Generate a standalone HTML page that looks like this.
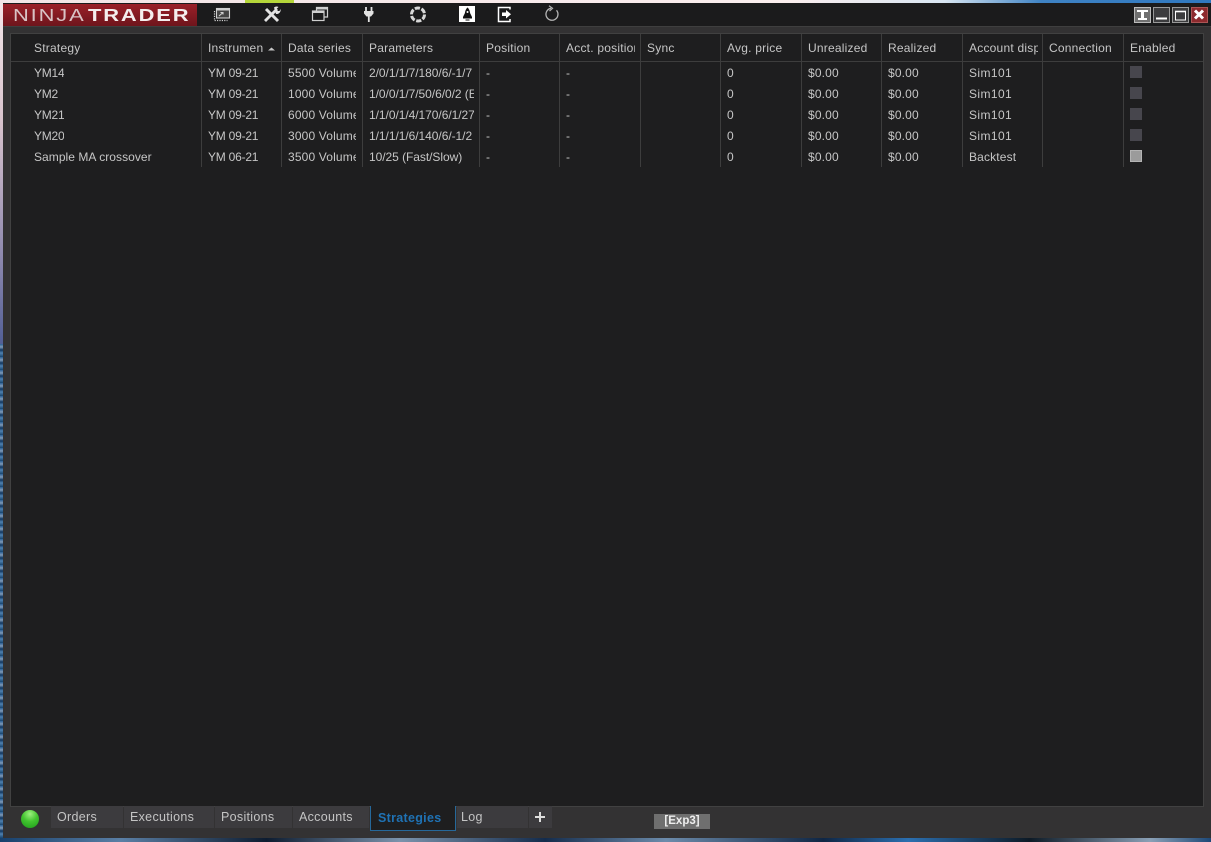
<!DOCTYPE html>
<html><head><meta charset="utf-8"><style>
html,body{margin:0;padding:0}
body{width:1211px;height:842px;overflow:hidden;position:relative;background:#123a66;font-family:"Liberation Sans",sans-serif}
div{position:absolute;box-sizing:border-box}
.t{font-size:12px;color:#c6c6c6;white-space:nowrap;overflow:hidden;line-height:14px;letter-spacing:.15px}
.h{top:41px;letter-spacing:.22px}
.y{letter-spacing:-.22px}
.p{letter-spacing:-.05px}
.s{letter-spacing:.4px}
.sep{width:1px;top:34px;height:133px;background:#3d3d3d}
.tab{top:806px;height:22px;background:#3c3b3e;color:#c4c4c4;font-size:12.5px;line-height:23px;padding-left:6px;letter-spacing:.3px}
.cb{left:1130px;width:12px;height:12px;background:#47464d}
svg{position:absolute;overflow:visible}
</style></head><body>
<div style="left:0;top:0;width:1211px;height:4px;background:linear-gradient(90deg,#f2e4e6 0,#fbeeee 65%,#d9e6f2 78%,#3f83c4 86%,#2f78c0 100%)"></div>
<div style="left:245px;top:0;width:49px;height:3px;background:#b5d63a"></div>
<div style="left:0;top:4px;width:3px;height:340px;background:linear-gradient(180deg,#f3e5e8,#d9c3cd 35%,#8d88ae 75%,#525f96)"></div>
<div style="left:0;top:344px;width:3px;height:498px;background:repeating-linear-gradient(180deg,#2b5f95 0,#7f9ab8 3px,#10365f 6px,#4f80af 9px,#17456f 13px)"></div>
<div style="left:0;top:838px;width:1211px;height:4px;background:linear-gradient(90deg,#17406c 0,#5a7fa5 10%,#0d1c30 22%,#7b93ac 33%,#142c4c 45%,#6c8bab 55%,#0f2644 68%,#2b6fb0 75%,#0d1a26 85%,#8aa0b6 95%,#1d4877)"></div>

<div style="left:3px;top:3px;width:1208px;height:835px;background:#333233"></div>
<div style="left:3px;top:3px;width:1208px;height:23px;background:#1b1b1c"></div>
<div style="left:3px;top:26px;width:1208px;height:1px;background:#3f3f3f"></div>
<div style="left:3px;top:4px;width:194px;height:22px;background:linear-gradient(180deg,#9a2029,#6e151c)"></div>
<div style="left:13px;top:5px;height:20px;font-size:17.5px;line-height:20px;letter-spacing:1.5px;color:#d9c3c5;white-space:nowrap;transform-origin:0 50%;transform:scaleX(1.25)">NINJA</div>
<div style="left:88px;top:5px;height:20px;font-size:17.5px;line-height:20px;letter-spacing:1.5px;font-weight:bold;color:#f4eeee;white-space:nowrap;transform-origin:0 50%;transform:scaleX(1.25)">TRADER</div>

<svg style="left:0;top:0" width="1211" height="28" fill="none" stroke="#cfcfcf">
<rect x="216.500" y="8.500" width="13" height="9.500" fill="#444" stroke-width="1.100"/><path d="M216 9.500h14" stroke-width="2"/>
<path d="M214.500 11v9.500h13" stroke-dasharray="1.200 1.200" stroke-width="1.200"/><path d="M219 16l4-3.500m-2.500 0h2.500v2" stroke-width="1.100"/>
<path d="M266 9l12 12" stroke="#e2e2e2" stroke-width="3"/><path d="M277 9l-12 12" stroke="#e2e2e2" stroke-width="2.800"/>
<path d="M274 7.500a4 4 0 0 1 4.500-.5l-2 2 1 2 2 0 1-2a4 4 0 0 1-4.500 5z" fill="#e2e2e2" stroke="none"/>
<path d="M316.500 10.500V7.500h11v9.500h-3.500" stroke-width="1.200"/><path d="M316.500 8.500h11" stroke-width="2"/>
<rect x="312.500" y="11" width="11.500" height="9.500" stroke-width="1.200"/><path d="M312.500 12h11.500" stroke-width="2"/>
<path d="M366 7v5M371.500 7v5" stroke="#e2e2e2" stroke-width="1.800"/><path d="M364 11h9.500v2.500l-2.500 3h-4.500l-2.500-3z" fill="#e2e2e2" stroke="none"/><path d="M368.800 16v6" stroke="#e2e2e2" stroke-width="1.800"/>
<circle cx="418" cy="14.500" r="6.500" stroke="#d8d8d8" stroke-width="3" stroke-dasharray="5.200 1.600"/>
<rect x="459" y="6" width="16" height="16" fill="#fff" stroke="none"/>
<path d="M467.500 7.500c1.900 1.600 2.800 4.500 2.800 8.500h-5.600c0-4 .9-6.900 2.800-8.500z" fill="#111" stroke="none"/><path d="M464.700 13.500l-1.700 3.500v1.500h9V17l-1.700-3.500z" fill="#111" stroke="none"/><path d="M465.500 20h4" stroke="#111" stroke-width="1"/><circle cx="467.500" cy="12" r="1" fill="#fff" stroke="none"/>
<path d="M510 9.500V7.500h-11.500v14H510v-2.500" stroke="#fff" stroke-width="1.500"/><path d="M502 12.500h4V10l5 4.200-5 4.300v-2.500h-4z" fill="#fff" stroke="none"/>
<path d="M551 8.300a6 6 0 1 0 5.500 2" stroke="#b4b4b4" stroke-width="1.300"/><path d="M549 5.800l3.500 2.500-3 2.700" stroke="#b4b4b4" stroke-width="1.200"/>
</svg>

<div style="left:1134px;top:7px;width:17px;height:16px;background:#707070;border:1px solid #bbb"></div>
<div style="left:1153px;top:7px;width:17px;height:16px;background:#3c3c3e;border:1px solid #999"></div>
<div style="left:1172px;top:7px;width:17px;height:16px;background:#3c3c3e;border:1px solid #999"></div>
<div style="left:1191px;top:7px;width:17px;height:16px;background:#8d2a2e;border:1px solid #a55"></div>
<svg style="left:0;top:0" width="1211" height="28" fill="none">
<path d="M1137 10h11v2h-4v6h3v2h-9v-2h3v-6h-4z" fill="#fff"/>
<path d="M1156 18.500h11" stroke="#fff" stroke-width="2"/>
<rect x="1175.500" y="11.500" width="10" height="8.500" stroke="#fff" stroke-width="1"/><path d="M1175 11.500h11" stroke="#fff" stroke-width="1.600"/>
<path d="M1195 10.500l8 8m0-8l-8 8" stroke="#fff" stroke-width="3"/>
</svg>

<div style="left:10px;top:33px;width:1194px;height:774px;background:#1e1e1f;border:1px solid #414141"></div>
<div style="left:11px;top:61px;width:1192px;height:1px;background:#3d3d3d"></div>
<div class="sep" style="left:201px"></div><div class="sep" style="left:281px"></div><div class="sep" style="left:362px"></div><div class="sep" style="left:479px"></div><div class="sep" style="left:559px"></div><div class="sep" style="left:640px"></div><div class="sep" style="left:720px"></div><div class="sep" style="left:801px"></div><div class="sep" style="left:881px"></div><div class="sep" style="left:962px"></div><div class="sep" style="left:1042px"></div><div class="sep" style="left:1123px"></div>

<div class="t h" style="left:34px">Strategy</div>
<div class="t h" style="left:208px">Instrumen</div>
<svg style="left:268px;top:47px" width="8" height="4"><path d="M0 3.500L3.500 0.500L7 3.500z" fill="#c6c6c6"/></svg>
<div class="t h" style="left:288px">Data series</div>
<div class="t h" style="left:369px">Parameters</div>
<div class="t h" style="left:486px">Position</div>
<div class="t h" style="left:566px;width:69px">Acct. position</div>
<div class="t h" style="left:647px">Sync</div>
<div class="t h" style="left:727px">Avg. price</div>
<div class="t h" style="left:808px">Unrealized</div>
<div class="t h" style="left:888px">Realized</div>
<div class="t h" style="left:969px;width:69px">Account display</div>
<div class="t h" style="left:1049px">Connection</div>
<div class="t h" style="left:1130px">Enabled</div>

<div class="t y" style="left:34px;top:66px">YM14</div><div class="t y" style="left:208px;top:66px">YM 09-21</div><div class="t" style="left:288px;top:66px;width:68px">5500 Volume</div><div class="t p" style="left:369px;top:66px;width:105px">2/0/1/1/7/180/6/-1/7</div><div class="t" style="left:486px;top:66px">-</div><div class="t" style="left:566px;top:66px">-</div><div class="t" style="left:727px;top:66px">0</div><div class="t" style="left:808px;top:66px">$0.00</div><div class="t" style="left:888px;top:66px">$0.00</div><div class="t s" style="left:969px;top:66px">Sim101</div>
<div class="t y" style="left:34px;top:87px">YM2</div><div class="t y" style="left:208px;top:87px">YM 09-21</div><div class="t" style="left:288px;top:87px;width:68px">1000 Volume</div><div class="t p" style="left:369px;top:87px;width:105px">1/0/0/1/7/50/6/0/2 (E</div><div class="t" style="left:486px;top:87px">-</div><div class="t" style="left:566px;top:87px">-</div><div class="t" style="left:727px;top:87px">0</div><div class="t" style="left:808px;top:87px">$0.00</div><div class="t" style="left:888px;top:87px">$0.00</div><div class="t s" style="left:969px;top:87px">Sim101</div>
<div class="t y" style="left:34px;top:108px">YM21</div><div class="t y" style="left:208px;top:108px">YM 09-21</div><div class="t" style="left:288px;top:108px;width:68px">6000 Volume</div><div class="t p" style="left:369px;top:108px;width:105px">1/1/0/1/4/170/6/1/27</div><div class="t" style="left:486px;top:108px">-</div><div class="t" style="left:566px;top:108px">-</div><div class="t" style="left:727px;top:108px">0</div><div class="t" style="left:808px;top:108px">$0.00</div><div class="t" style="left:888px;top:108px">$0.00</div><div class="t s" style="left:969px;top:108px">Sim101</div>
<div class="t y" style="left:34px;top:129px">YM20</div><div class="t y" style="left:208px;top:129px">YM 09-21</div><div class="t" style="left:288px;top:129px;width:68px">3000 Volume</div><div class="t p" style="left:369px;top:129px;width:105px">1/1/1/1/6/140/6/-1/2</div><div class="t" style="left:486px;top:129px">-</div><div class="t" style="left:566px;top:129px">-</div><div class="t" style="left:727px;top:129px">0</div><div class="t" style="left:808px;top:129px">$0.00</div><div class="t" style="left:888px;top:129px">$0.00</div><div class="t s" style="left:969px;top:129px">Sim101</div>
<div class="t" style="left:34px;top:150px;letter-spacing:.05px">Sample MA crossover</div><div class="t y" style="left:208px;top:150px">YM 06-21</div><div class="t" style="left:288px;top:150px;width:68px">3500 Volume</div><div class="t p" style="left:369px;top:150px;width:105px">10/25 (Fast/Slow)</div><div class="t" style="left:486px;top:150px">-</div><div class="t" style="left:566px;top:150px">-</div><div class="t" style="left:727px;top:150px">0</div><div class="t" style="left:808px;top:150px">$0.00</div><div class="t" style="left:888px;top:150px">$0.00</div><div class="t" style="left:969px;top:150px">Backtest</div>

<div class="cb" style="top:66px"></div><div class="cb" style="top:87px"></div><div class="cb" style="top:108px"></div><div class="cb" style="top:129px"></div>
<div class="cb" style="top:150px;background:#9b9b9b;border:1px solid #b4b4b4"></div>

<div style="left:21px;top:810px;width:18px;height:18px;border-radius:50%;background:radial-gradient(circle at 50% 22%,#9cf07e 0,#43c430 45%,#1d9a1a 100%)"></div>
<div class="tab" style="left:51px;width:72px">Orders</div>
<div class="tab" style="left:124px;width:90px">Executions</div>
<div class="tab" style="left:215px;width:77px">Positions</div>
<div class="tab" style="left:293px;width:76px">Accounts</div>
<div style="left:370px;top:806px;width:86px;height:25px;background:#1e1e1f;border:1px solid #26689a;border-top:0;color:#1f72b4;font-weight:bold;font-size:12.5px;line-height:24px;padding-left:7px;letter-spacing:.3px">Strategies</div>
<div class="tab" style="left:457px;width:71px;padding-left:4px">Log</div>
<div style="left:529px;top:806px;width:23px;height:22px;background:#3c3b3e"></div>
<svg style="left:535px;top:812px" width="11" height="11"><path d="M5 0v10M0 5h10" stroke="#ddd" stroke-width="2"/></svg>
<div style="left:654px;top:814px;width:56px;height:15px;background:#6f6f6f;color:#eee;font-weight:bold;font-size:11.5px;line-height:15px;text-align:center">[Exp3]</div>
</body></html>
